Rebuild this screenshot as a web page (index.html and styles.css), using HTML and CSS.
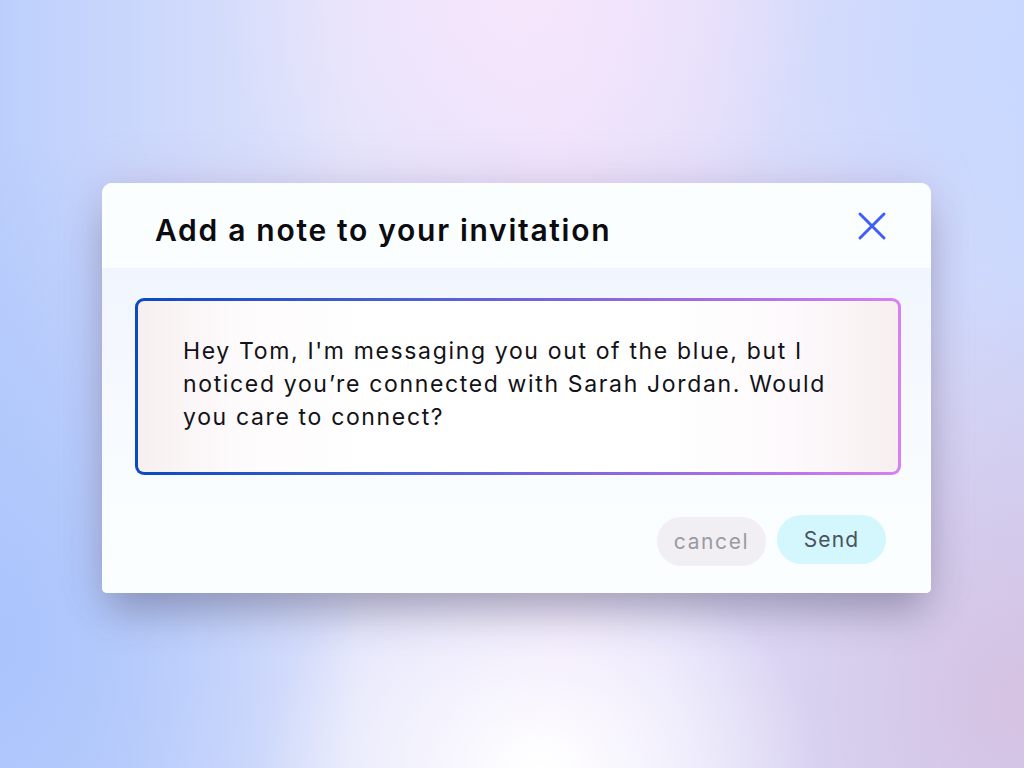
FILE: index.html
```html
<!DOCTYPE html>
<html lang="en">
<head>
<meta charset="utf-8">
<title>Add a note</title>
<link rel="stylesheet" href="styles.css">
</head>
<body>
<div class="stage">
  <div class="card">
    <div class="card-head">
      <h1 class="title">Add a note to your invitation</h1>
      <button class="close" aria-label="Close">
        <svg width="30" height="30" viewBox="0 0 30 30"><path d="M3 3 L27 27 M27 3 L3 27" stroke="#3f5cf7" stroke-width="3" stroke-linecap="round" fill="none"/></svg>
      </button>
    </div>
    <div class="card-body">
      <div class="note-frame">
        <div class="note"><p class="note-text">Hey Tom, I'm messaging you out of the blue, but I noticed you’re connected with Sarah Jordan. Would you care to connect?</p></div>
      </div>
      <div class="actions">
        <button class="btn btn-cancel">cancel</button>
        <button class="btn btn-send">Send</button>
      </div>
    </div>
  </div>
</div>
</body>
</html>
```

FILE: styles.css
```css
html, body {
  margin: 0;
  padding: 0;
  width: 1024px;
  height: 768px;
  overflow: hidden;
}
body {
  font-family: Inter, "Noto Sans", sans-serif;
  background:
    radial-gradient(ellipse 300px 260px at 520px 0px, rgba(246,230,252,0.95), rgba(246,230,252,0) 100%),
    radial-gradient(ellipse 280px 220px at 540px 768px, rgba(255,255,255,1), rgba(255,255,255,0) 100%),
    radial-gradient(ellipse 360px 420px at 1024px 700px, rgba(214,192,224,0.95), rgba(214,192,224,0) 100%),
    radial-gradient(ellipse 320px 360px at 1024px 60px, rgba(200,216,255,1), rgba(200,216,255,0) 100%),
    radial-gradient(ellipse 360px 500px at 0px 640px, rgba(170,196,252,1), rgba(170,196,252,0) 100%),
    linear-gradient(90deg, #bccffc 0%, #e2e4fb 35%, #ece2fb 55%, #dadcfa 80%, #cfd8fb 100%);
}
.stage {
  display: flex;
  justify-content: flex-start;
  padding: 183px 0 0 102px;
}
.card {
  width: 829px;
  height: 410px;
  border-radius: 10px 10px 5px 5px;
  background: #fbfeff;
  box-shadow: 0 24px 40px -6px rgba(60, 60, 90, 0.38), 0 -6px 40px rgba(190, 170, 210, 0.35);
  display: flex;
  flex-direction: column;
  overflow: hidden;
}
.card-head {
  height: 85px;
  display: flex;
  align-items: center;
  justify-content: space-between;
  padding: 0 44px 0 53px;
  background: #fbfeff;
}
.title {
  margin: 8px 0 0 0;
  font-size: 30px;
  font-weight: 600;
  color: #0b0b10;
  letter-spacing: 1.7px;
}
.close {
  border: 0;
  background: transparent;
  padding: 0;
  width: 30px;
  height: 30px;
  margin-top: 0;
  cursor: pointer;
}
.card-body {
  flex: 1;
  background: linear-gradient(180deg, #f1f5fd 0%, #f6f9fe 40%, #fafdff 70%, #fbfeff 100%);
  padding: 30px 30px 0 33px;
  display: flex;
  flex-direction: column;
}
.note-frame {
  height: 177px;
  border-radius: 9px;
  padding: 3px;
  background: linear-gradient(90deg, #0a4ac2 0%, #4b5fd6 35%, #9c6ae0 70%, #d880f0 100%);
  box-sizing: border-box;
}
.note {
  height: 100%;
  box-sizing: border-box;
  border-radius: 6px;
  background: linear-gradient(90deg, #f7efef 0%, #fdfafc 12%, #ffffff 30%, #ffffff 70%, #fdf9fc 86%, #f7efef 100%);
  padding: 34px 20px 0 45px;
}
.note-text {
  margin: 0;
  max-width: 670px;
  font-size: 23px;
  line-height: 33px;
  color: #121217;
  letter-spacing: 1.65px;
}
.actions {
  display: flex;
  justify-content: flex-end;
  gap: 11px;
  padding: 41px 15px 0 0;
}
.btn {
  border: 0;
  height: 49px;
  border-radius: 25px;
  width: 109px;
  font-family: Inter, "Noto Sans", sans-serif;
  font-size: 21px;
  cursor: pointer;
  padding: 0;
}
.btn-cancel {
  background: #f1eff3;
  color: #9c9aa1;
  margin-top: 1px;
  letter-spacing: 1.6px;
}
.btn-send {
  background: #d3f7fd;
  color: #4a5160;
  margin-top: -1px;
  letter-spacing: 1.1px;
}
```
